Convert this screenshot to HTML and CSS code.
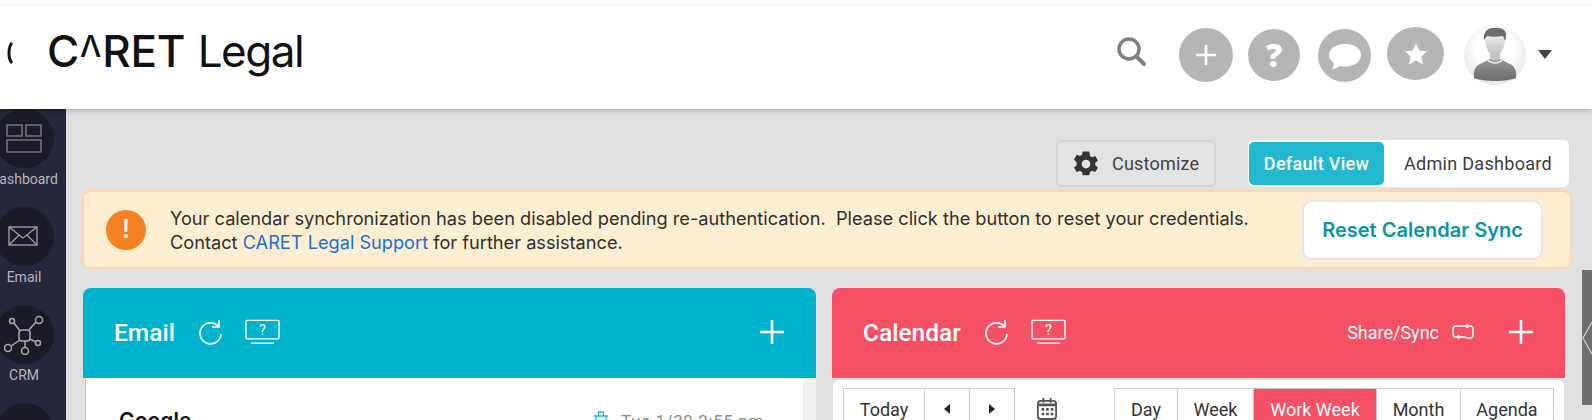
FILE: index.html
```html
<!DOCTYPE html>
<html lang="en">
<head>
    <meta charset="UTF-8">
    <meta name="viewport" content="width=device-width, initial-scale=1.0">
    <title>CARET Legal</title>
    <link rel="stylesheet" href="styles.css">
</head>
<body>
    <header class="topbar">
        <svg class="logo-sliver" width="6" height="22" viewBox="0 0 6 22"><path d="M5 1C1 5 1 17 5 21" fill="none" stroke="#111" stroke-width="3"/></svg>
        <div class="logo"><span class="logo-bold">C<span class="logo-caret">Λ</span>RET</span> <span class="logo-light">Legal</span></div>
        <div class="top-actions">
            <svg class="search-icon" width="30" height="30" viewBox="0 0 30 30"><circle cx="12" cy="12" r="10" fill="none" stroke="#808080" stroke-width="3.500"/><path d="M20 20l7 7" stroke="#808080" stroke-width="4" stroke-linecap="round"/></svg>
            <div class="round-btn round-plus">
                <svg width="26" height="26" viewBox="0 0 26 26"><path d="M13 3v20M3 13h20" stroke="#fff" stroke-width="2.600"/></svg>
            </div>
            <div class="round-btn round-help">?</div>
            <div class="round-btn round-chat">
                <svg width="36" height="28" viewBox="0 0 36 28"><path d="M18 2C8 2 2 7 2 13c0 3 2 6 5 8 0 2-1 4-2 6 3 0 6-2 8-3 2 .5 3 .5 5 .5 10 0 16-5 16-11.500S28 2 18 2z" fill="#fff"/></svg>
            </div>
            <div class="round-btn round-star">
                <svg width="24" height="24" viewBox="0 0 24 24"><path d="M12 1l3.300 7.400 8 .8-6 5.400 1.700 8L12 18.500 5 22.600l1.700-8-6-5.400 8-.8z" fill="#fff"/></svg>
            </div>
            <svg class="avatar" width="62" height="60" viewBox="0 0 62 60">
                <defs>
                    <radialGradient id="avatarBg" cx="50%" cy="40%" r="60%"><stop offset="0.5" stop-color="#fff"/><stop offset="1" stop-color="#e6e6e6"/></radialGradient>
                    <linearGradient id="avatarBody" x1="0" y1="0" x2="0" y2="1"><stop offset="0" stop-color="#989898"/><stop offset="1" stop-color="#6a6a6a"/></linearGradient>
                    <linearGradient id="avatarFace" x1="0" y1="0" x2="0" y2="1"><stop offset="0" stop-color="#f7f7f7"/><stop offset="1" stop-color="#bdbdbd"/></linearGradient>
                </defs>
                <ellipse cx="31" cy="30" rx="31" ry="30" fill="url(#avatarBg)"/>
                <path d="M10 53c-1-8 2-13 8-15l8-4h10l8 4c6 2 9 7 8 15-5 2-13 3-21 3s-16-1-21-3z" fill="url(#avatarBody)"/>
                <path d="M24 34c3 4 11 4 14 0l1 1c-3 5-13 5-16 0z" fill="#e8e8e8"/>
                <path d="M26 24h10v10c-2 2-8 2-10 0z" fill="#c4c4c4"/>
                <path d="M21 14c0-6 4-8 10-8s10 2 10 8c0 9-5 17-10 17s-10-8-10-17z" fill="url(#avatarFace)"/>
                <path d="M20 15c-1-6 2-12 9-12 3 0 9-1 12 3 2 3 1 7 0 10-1-2-1-5-3-5-5 1-10 1-14 0-2 0-3 3-4 4z" fill="#6d6d6d"/>
            </svg>
            <span class="avatar-caret"></span>
        </div>
    </header>

    <div class="page">
        <nav class="sidebar">
            <div class="side-item">
                <div class="side-circle">
                    <svg width="36" height="30" viewBox="0 0 36 30" fill="none" stroke="#77777c" stroke-width="1.500"><rect x="1" y="1" width="15" height="11"/><rect x="20" y="1" width="15" height="11"/><rect x="1" y="16" width="34" height="12"/></svg>
                </div>
                <span>Dashboard</span>
            </div>
            <div class="side-item">
                <div class="side-circle">
                    <svg width="32" height="22" viewBox="0 0 32 22" fill="none" stroke="#a2a2a6" stroke-width="1.300"><rect x="1" y="1" width="28" height="18"/><path d="M1 1l14 11L29 1M1 19l10-10M29 19L19 9"/></svg>
                </div>
                <span>Email</span>
            </div>
            <div class="side-item">
                <div class="side-circle">
                    <svg width="42" height="40" viewBox="0 0 42 40" fill="none" stroke="#a8a8ac" stroke-width="1.500"><rect x="16" y="15" width="11" height="11" rx="3"/><circle cx="9" cy="6" r="2.500"/><circle cx="36" cy="5" r="3.500"/><circle cx="5" cy="33" r="3.500"/><circle cx="22" cy="36" r="3.500"/><circle cx="35" cy="28" r="2.500"/><path d="M11 8l6 8M33 7l-7 8M8 31l9-6M22 26v6M27 24l6 3"/></svg>
                </div>
                <span>CRM</span>
            </div>
            <div class="side-item">
                <div class="side-circle"></div>
            </div>
        </nav>

        <main class="main">
            <div class="toolbar">
                <button class="customize-btn">
                    <svg width="30" height="30" viewBox="0 0 24 24"><path fill="#333" d="M19.400 13a7.500 7.500 0 0 0 0-2l2.200-1.700-2.200-3.700-2.600 1a7.500 7.500 0 0 0-1.700-1L14.700 2H9.300l-.4 2.600a7.500 7.500 0 0 0-1.700 1l-2.600-1-2.200 3.700L4.600 11a7.500 7.500 0 0 0 0 2l-2.200 1.700 2.200 3.700 2.600-1a7.500 7.500 0 0 0 1.700 1l.4 2.600h5.400l.4-2.600a7.500 7.500 0 0 0 1.700-1l2.600 1 2.200-3.700zM12 15.500a3.500 3.500 0 1 1 0-7 3.500 3.500 0 0 1 0 7z"/></svg>
                    Customize
                </button>
                <div class="view-toggle">
                    <span class="view-btn view-active">Default View</span>
                    <span class="view-btn view-admin">Admin Dashboard</span>
                </div>
            </div>

            <div class="alert">
                <div class="alert-icon">!</div>
                <p class="alert-text">Your calendar synchronization has been disabled pending re-authentication.&nbsp; Please click the button to reset your credentials.<br>Contact <a href="#">CARET Legal Support</a> for further assistance.</p>
                <button class="reset-btn">Reset Calendar Sync</button>
            </div>

            <div class="panels">
                <section class="panel">
                    <div class="panel-head head-email">
                        <h2>Email</h2>
                        <svg class="head-refresh" width="26" height="28" viewBox="0 0 26 28" fill="none" stroke="#fff" stroke-width="1.700"><path d="M21 8a10.500 10.500 0 1 0 3 8"/><path d="M22 2v7h-7" /></svg>
                        <svg class="head-help" width="35" height="26" viewBox="0 0 36 26" fill="none" stroke="#fff" stroke-width="1.400"><rect x="1" y="1" width="34" height="19" rx="1"/><path d="M6 24.500h24"/><text x="18" y="16" text-anchor="middle" class="help-mark">?</text></svg>
                        <svg class="head-plus" width="24" height="24" viewBox="0 0 24 24"><path d="M12 0v24M0 12h24" stroke="#fff" stroke-width="2.600"/></svg>
                    </div>
                    <div class="email-body">
                        <div class="email-list">
                            <div class="email-row">
                                <span class="email-sender">Google</span>
                                <svg class="trash-icon" width="16" height="20" viewBox="0 0 16 20" fill="none" stroke="#1fb6d0" stroke-width="1.300"><path d="M1 5h14M5.500 5V1h5v4M3 5v14h10V5"/></svg>
                                <span class="email-date">Tue 1/30 2:55 pm</span>
                            </div>
                        </div>
                        <div class="email-scroll"></div>
                    </div>
                </section>

                <section class="panel">
                    <div class="panel-head head-calendar">
                        <h2>Calendar</h2>
                        <svg class="head-refresh" width="26" height="28" viewBox="0 0 26 28" fill="none" stroke="#fff" stroke-width="1.700"><path d="M21 8a10.500 10.500 0 1 0 3 8"/><path d="M22 2v7h-7" /></svg>
                        <svg class="head-help" width="35" height="26" viewBox="0 0 36 26" fill="none" stroke="#fff" stroke-width="1.400"><rect x="1" y="1" width="34" height="19" rx="1"/><path d="M6 24.500h24"/><text x="18" y="16" text-anchor="middle" class="help-mark">?</text></svg>
                        <span class="share-sync">Share/Sync</span>
                        <svg class="sync-icon" width="22" height="18" viewBox="0 0 22 18" fill="none" stroke="#fff" stroke-width="1.500"><path d="M8 3H4a3 3 0 0 0-3 3v5a3 3 0 0 0 3 3h10M14 15h4a3 3 0 0 0 3-3V6a3 3 0 0 0-3-3H8M16 1l-2 2 2 2M6 12l2 2-2 2"/></svg>
                        <svg class="head-plus" width="24" height="24" viewBox="0 0 24 24"><path d="M12 0v24M0 12h24" stroke="#fff" stroke-width="2.600"/></svg>
                    </div>
                    <div class="cal-body">
                        <div class="btn-group">
                            <span class="cal-btn cal-today">Today</span>
                            <span class="cal-btn cal-arrow"><i class="tri-left"></i></span>
                            <span class="cal-btn cal-arrow"><i class="tri-right"></i></span>
                        </div>
                        <svg class="cal-icon" width="24" height="24" viewBox="0 0 22 24"><rect x="1" y="3" width="20" height="20" rx="3" fill="none" stroke="#555" stroke-width="2"/><path d="M1 6h20v3H1zM6 0h2v5H6zM14 0h2v5h-2z" fill="#555"/><path d="M5 11h3v3H5zM10 11h3v3h-3zM15 11h3v3h-3zM5 16h3v3H5zM10 16h3v3h-3zM15 16h3v3h-3z" fill="#555"/></svg>
                        <div class="btn-group cal-views">
                            <span class="cal-btn cal-day">Day</span>
                            <span class="cal-btn cal-week">Week</span>
                            <span class="cal-btn cal-work cal-active">Work Week</span>
                            <span class="cal-btn cal-month">Month</span>
                            <span class="cal-btn cal-agenda">Agenda</span>
                        </div>
                    </div>
                </section>
            </div>
        </main>
    </div>

    <div class="side-tab">
        <svg width="10" height="34" viewBox="0 0 10 34" fill="none" stroke="#c9c9c9" stroke-width="1.300"><path d="M10 1L1 17l9 16"/></svg>
    </div>
</body>
</html>
```

FILE: styles.css
```css
html, body {
    margin: 0;
    height: 100%;
    overflow: hidden;
    background: #e1e1e1;
    font-family: Roboto, "Liberation Sans", sans-serif;
}

/* top bar */
.topbar {
    position: relative;
    z-index: 2;
    display: flex;
    align-items: center;
    height: 109px;
    box-sizing: border-box;
    background: linear-gradient(#fff 4px, #f4f4f4 4px, #f4f4f4 5px, #fff 5px);
    box-shadow: 0 1px 6px rgba(0, 0, 0, 0.25);
}

.logo-sliver {
    margin: 0 0 4px 7px;
}

.logo {
    margin-left: 34px;
    padding-bottom: 8px;
    font-family: Inter, "Liberation Sans", sans-serif;
    font-size: 44px;
    font-weight: 400;
    color: #111;
}

.logo-bold {
    font-weight: 500;
    letter-spacing: -0.2px;
}

.logo-light {
    letter-spacing: -1.5px;
}

.logo-caret {
    display: inline-block;
    font-size: 30px;
    vertical-align: 10px;
    margin: 0 1px;
}

.top-actions {
    display: flex;
    align-items: center;
    margin-left: auto;
    margin-right: 40px;
}

.search-icon {
    margin: 0 32px 6px 0;
}

.round-btn {
    display: flex;
    align-items: center;
    justify-content: center;
    border-radius: 50%;
    background: #b5b5b5;
    color: #fff;
}

.round-plus {
    width: 54px;
    height: 54px;
}

.round-help {
    width: 52px;
    height: 52px;
    margin-left: 15px;
    font-family: "Open Sans", sans-serif;
    font-size: 32px;
    font-weight: 800;
}

.round-chat {
    width: 53px;
    height: 53px;
    margin: 2px 0 0 18px;
}

.round-star {
    width: 57px;
    height: 53px;
    margin: 0 0 2px 16px;
}

.avatar {
    margin-left: 20px;
}

.avatar-caret {
    margin-left: 12px;
    border: 7px solid transparent;
    border-top: 9px solid #444;
    border-bottom: 0;
}

/* page */
.page {
    display: flex;
    height: 311px;
    overflow: hidden;
}

.sidebar {
    flex: none;
    width: 66px;
    overflow: hidden;
    background: #25273a;
}

.side-item {
    display: flex;
    flex-direction: column;
    align-items: center;
    width: 48px;
    height: 98px;
    font-size: 14px;
    color: #b5b6bc;
}

.side-item span {
    margin-top: 3px;
    line-height: 16px;
    white-space: nowrap;
}

.side-circle {
    flex: none;
    display: flex;
    align-items: center;
    justify-content: center;
    width: 59px;
    height: 59px;
    border-radius: 50%;
    background: #1b1b27;
}

.main {
    flex: 1;
    min-width: 0;
    padding: 31px 20px 0 16px;
}

/* toolbar */
.toolbar {
    display: flex;
    justify-content: flex-end;
    gap: 32px;
    height: 47px;
    margin-right: 3px;
}

.customize-btn {
    display: flex;
    align-items: center;
    gap: 11px;
    width: 160px;
    padding: 0 0 0 13px;
    box-sizing: border-box;
    border: 2px solid #d2d2d2;
    border-radius: 6px;
    background: #e3e3e3;
    font: 18px Roboto, sans-serif;
    letter-spacing: 0.2px;
    color: #444;
}

.view-toggle {
    display: flex;
    width: 321px;
    box-sizing: border-box;
    padding: 2px 2px 2px 1px;
    border-radius: 6px;
    background: #fff;
}

.view-btn {
    display: flex;
    align-items: center;
    justify-content: center;
    flex: 1;
    font-size: 18px;
    letter-spacing: 0.3px;
    color: #3d3d3d;
}

.view-admin {
    padding-left: 5px;
}

.view-active {
    flex: none;
    width: 135px;
    border-radius: 5px;
    background: #22b8cf;
    font-weight: 500;
    color: #fff;
}

/* alert */
.alert {
    display: flex;
    align-items: center;
    height: 79px;
    margin-top: 3px;
    box-sizing: border-box;
    border: 2px solid #fdd5ae;
    border-radius: 8px;
    background: #feeed1;
    font-family: Inter, sans-serif;
    color: #2f2f2f;
}

.alert-icon {
    flex: none;
    width: 40px;
    height: 40px;
    margin-left: 22px;
    border-radius: 50%;
    background: #f58220;
    font-size: 26px;
    font-weight: 500;
    line-height: 38px;
    text-align: center;
    color: #fff;
}

.alert-text {
    flex: 1;
    margin: 0 0 0 24px;
    font-size: 18.2px;
    line-height: 24px;
}

.alert-text a {
    color: #1a6fd4;
    text-decoration: none;
}

.reset-btn {
    flex: none;
    width: 241px;
    height: 60px;
    margin-right: 27px;
    border: 2px solid #e4e4e6;
    border-radius: 10px;
    background: #fff;
    font: 600 20px Inter, sans-serif;
    color: #0a94a8;
}

/* dashboard panels */
.panels {
    display: grid;
    grid-template-columns: 733px 733px;
    gap: 16px;
    margin: 19px 0 0 1px;
}

.panel {
    min-width: 0;
}

.panel-head {
    display: flex;
    align-items: center;
    height: 90px;
    padding: 0 32px 2px 31px;
    box-sizing: border-box;
    border-radius: 8px 8px 0 0;
    color: #fff;
}

.head-email {
    background: #00b3cc;
}

.head-calendar {
    background: #f55063;
}

.panel-head h2 {
    margin: 0;
    font-size: 24.5px;
    font-weight: 500;
}

.head-refresh {
    margin-left: 22px;
}

.head-help {
    margin-left: 22px;
}

.help-mark {
    font: 15px Roboto, sans-serif;
    fill: #fff;
    stroke: none;
}

.head-plus {
    margin-left: auto;
}

.share-sync {
    margin-left: auto;
    font-size: 18px;
}

.sync-icon {
    margin-left: 13px;
}

.sync-icon + .head-plus {
    margin-left: 35px;
}

.email-body {
    display: flex;
    height: 42px;
    margin-left: 2px;
    border-left: 1px solid #c9c9c9;
    background: #fff;
    overflow: hidden;
}

.email-list {
    flex: 1;
}

.email-row {
    display: flex;
    align-items: center;
    padding: 30px 39px 0 33px;
}

.email-sender {
    font: 600 21px Inter, sans-serif;
    color: #111;
}

.trash-icon {
    margin-left: auto;
}

.email-date {
    margin-left: 12px;
    font-size: 17px;
    letter-spacing: 0.6px;
    color: #8a8a8a;
}

.email-scroll {
    flex: none;
    width: 13px;
    background: #f1f1f1;
}

.cal-body {
    display: flex;
    align-items: flex-start;
    height: 40px;
    margin: 2px 1px 0;
    padding: 8px 10px 0 10px;
    box-sizing: border-box;
    border-radius: 6px 6px 0 0;
    background: #fff;
    overflow: hidden;
}

.btn-group {
    display: flex;
    border: 1px solid #ccc;
}

.cal-btn {
    display: flex;
    align-items: center;
    justify-content: center;
    box-sizing: border-box;
    height: 40px;
    border-left: 1px solid #ccc;
    font-size: 18px;
    color: #333;
}

.cal-btn:first-child {
    border-left: 0;
}

.cal-today {
    width: 80px;
}

.cal-arrow {
    width: 45px;
}

.tri-left, .tri-right {
    border: 5px solid transparent;
}

.tri-left {
    border-left: 0;
    border-right: 6px solid #222;
}

.tri-right {
    border-right: 0;
    border-left: 6px solid #222;
}

.cal-icon {
    margin: 9px 0 0 22px;
}

.cal-views {
    margin-left: 57px;
}

.cal-day {
    width: 62px;
}

.cal-week {
    width: 76px;
}

.cal-work {
    width: 123px;
}

.cal-month {
    width: 84px;
}

.cal-agenda {
    width: 93px;
}

.cal-active {
    background: #f55063;
    color: #fff;
}

/* collapsed panel on the right edge */
.side-tab {
    position: absolute;
    top: 270px;
    right: 0;
    display: flex;
    align-items: center;
    justify-content: center;
    width: 10px;
    height: 135px;
    background: #6f6f6f;
}
```
